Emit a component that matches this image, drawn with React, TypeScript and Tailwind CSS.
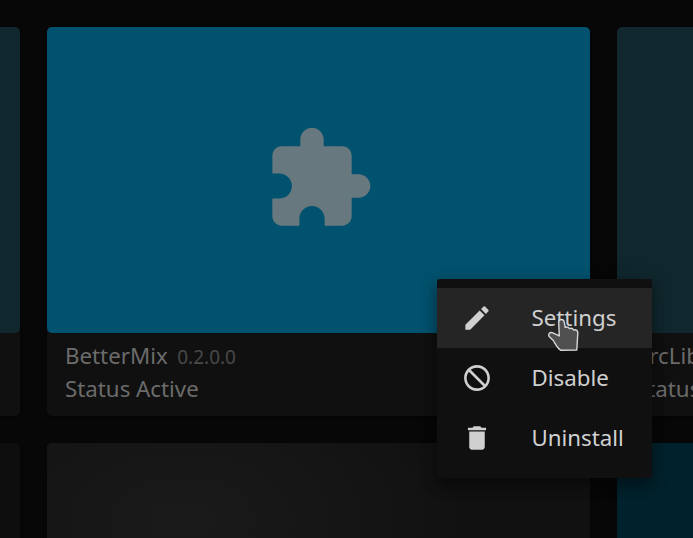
import React from 'react';

const EXTENSION =
  'M20.5 11H19V7c0-1.1-.9-2-2-2h-4V3.5C13 2.12 11.88 1 10.5 1S8 2.12 8 3.5V5H4c-1.1 0-1.99.9-1.99 2v3.8H3.5c1.49 0 2.7 1.21 2.7 2.7s-1.21 2.7-2.7 2.7H2V20c0 1.1.9 2 2 2h3.8v-1.5c0-1.49 1.21-2.7 2.7-2.7 1.49 0 2.7 1.21 2.7 2.7V22H17c1.1 0 2-.9 2-2v-4h1.5c1.38 0 2.5-1.12 2.5-2.5S21.88 11 20.5 11z';
const EDIT =
  'M3 17.25V21h3.75L17.81 9.94l-3.75-3.75L3 17.25zM20.71 7.04c.39-.39.39-1.02 0-1.41l-2.34-2.34c-.39-.39-1.02-.39-1.41 0l-1.83 1.83 3.75 3.75 1.83-1.83z';
const BLOCK =
  'M12 2C6.48 2 2 6.48 2 12s4.48 10 10 10 10-4.48 10-10S17.52 2 12 2zM4 12c0-4.42 3.58-8 8-8 1.85 0 3.55.63 4.9 1.69L5.69 16.9C4.63 15.55 4 13.85 4 12zm8 8c-1.85 0-3.55-.63-4.9-1.69L18.31 7.1C19.37 8.45 20 10.15 20 12c0 4.42-3.58 8-8 8z';
const DELETE = 'M6 19c0 1.1.9 2 2 2h8c1.1 0 2-.9 2-2V7H6v12zM19 4h-3.5l-1-1h-5l-1 1H5v2h14V4z';

interface IconProps {
  d: string;
  className: string;
  viewBox?: string;
}

function Icon({ d, className, viewBox = '0 0 24 24' }: IconProps) {
  return (
    <svg viewBox={viewBox} fill="currentColor" className={className}>
      <path d={d} />
    </svg>
  );
}

interface CardProps {
  cover: string;
  name?: string;
  version?: string;
  icon?: boolean;
}

function Card({ cover, name, version, icon }: CardProps) {
  return (
    <article className="h-[389px] w-[543px] shrink-0 rounded-[5px] bg-[#101010] shadow-[0_2px_3px_rgba(0,0,0,0.3)]">
      <div className={`flex h-[306px] items-center justify-center rounded-[5px] ${cover}`}>
        {icon && <Icon d={EXTENSION} className="mb-[2px] size-28 text-[#67787f]" />}
      </div>
      {name && (
        <div className="px-[18px] pt-[6px] text-[22.3px] text-[#6b6b6b]">
          <div className="flex h-[33px] items-baseline leading-[33px] whitespace-nowrap">
            {name}
            <span className="ml-[9.5px] text-[19px] text-[#484848]">{version}</span>
          </div>
          <div className="h-[33px] leading-[33px]">Status Active</div>
        </div>
      )}
    </article>
  );
}

const MENU = [
  { label: 'Settings', d: EDIT, active: true, flip: false },
  { label: 'Disable', d: BLOCK, active: false, flip: true },
  { label: 'Uninstall', d: DELETE, active: false, flip: false },
];

export default function App() {
  return (
    <main className="relative h-[538px] w-[693px] overflow-hidden bg-[#070707] font-['Noto_Sans',sans-serif]">
      <div className="-ml-[523px] flex flex-col gap-[27px] pt-[27px]">
        <div className="flex gap-[27px]">
          <Card cover="bg-[#10272e]" />
          <Card cover="bg-[#00526e]" name="BetterMix" version="0.2.0.0" icon />
          <Card cover="bg-[#10272e]" name="ArcLib" version="1.0.0" />
        </div>
        <div className="flex gap-[27px]">
          <Card cover="bg-[#0e0e0e]" />
          <Card cover="bg-[radial-gradient(ellipse_280px_170px_at_134px_77px,#1a1a1a,#161616_50%,#111111)]" />
          <Card cover="bg-[#00222d]" />
        </div>
      </div>

      <div className="absolute top-[279px] left-[437px] h-[199px] w-[215px] rounded-[3px] bg-[#101010] pt-[9px] text-[22.3px] text-[#d0d0d0] shadow-[0_9px_12px_1px_rgba(0,0,0,0.25),0_3px_18px_2px_rgba(0,0,0,0.2)]">
        {MENU.map((item) => (
          <div
            key={item.label}
            className={`flex h-[60px] items-center gap-[38.5px] pl-6 ${item.active ? 'bg-[#252525]' : ''}`}
          >
            <Icon
              d={item.d}
              viewBox="-0.387 -0.387 24.774 24.774"
              className={`size-8 shrink-0 ${item.flip ? '-scale-x-100' : ''}`}
            />
            <span className="leading-[30px]">{item.label}</span>
          </div>
        ))}
      </div>

      <svg
        viewBox="0 0 34 34"
        className="absolute top-[318px] left-[547px] size-[34px]"
        fill="#505050"
        stroke="#d8d8d8"
        strokeWidth="1.4"
        strokeLinejoin="round"
      >
        <path d="M11.7 4.2C11.9 .8 16.6 .6 17.2 4L18.2 9.4C19.8 8.7 21.5 9.3 22.4 10.6C24.2 9.9 25.8 10.5 26.6 12C29.2 11.3 30.9 12.6 30.8 15L29.8 32L13.6 32.2C10.2 30 8.5 26 6.3 22.5L2.2 18.6C.7 16.4 2.5 14 5.2 14.6L12.3 17.9Z" />
      </svg>
    </main>
  );
}
